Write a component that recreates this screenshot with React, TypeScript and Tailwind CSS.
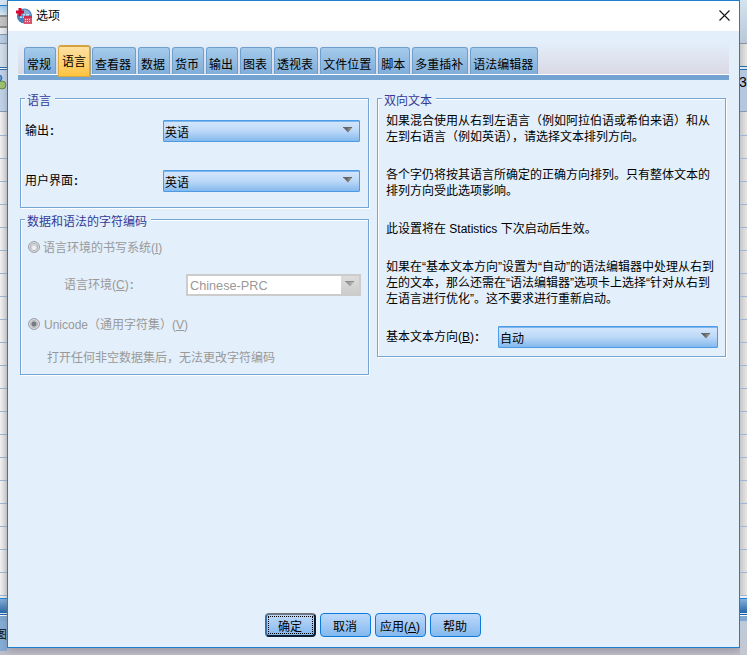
import React from "react";

const tabs = [
  "常规",
  "语言",
  "查看器",
  "数据",
  "货币",
  "输出",
  "图表",
  "透视表",
  "文件位置",
  "脚本",
  "多重插补",
  "语法编辑器",
];

const rows = Array.from({ length: 20 }, (_, i) => i);

const Arrow = ({ disabled = false }: { disabled?: boolean }) => (
  <svg width="10" height="7" viewBox="0 0 10 7" className="mb-[2px] shrink-0">
    <defs>
      <linearGradient id={disabled ? "arrow-off" : "arrow-on"}>
        <stop offset="0" stopColor={disabled ? "#858585" : "#444"} />
        <stop offset="1" stopColor={disabled ? "#c4c4c4" : "#aaa"} />
      </linearGradient>
    </defs>
    <path d="M.5 .5H9.5L5 5.5Z" fill={disabled ? "url(#arrow-off)" : "url(#arrow-on)"} />
    <path d="M0 .5H9" stroke={disabled ? "#8d8d8d" : "#666"} />
  </svg>
);

const Select = ({ value, className }: { value: string; className: string }) => (
  <div
    className={`flex h-[22px] items-center justify-between rounded-[1px] border border-[#4b9be6] bg-linear-to-b from-[#d5e6fc] via-[#bcd9f8] to-[#84b9ec] pr-[6px] pl-px shadow-[inset_0_1px_0_#7db7ef] ${className}`}
  >
    <span className="pt-[3px]">{value}</span>
    <Arrow />
  </div>
);

const Group = ({
  title,
  className,
  children,
}: {
  title: string;
  className: string;
  children: React.ReactNode;
}) => (
  <section
    className={`border border-[#74a5d5] shadow-[1px_1px_0_#fff,inset_1px_1px_0_#fff] ${className}`}
  >
    <h2 className="-mt-[7px] ml-1 h-4 w-fit bg-[#e3effb] pr-1 pl-[2px] leading-[18px] text-[#333b98]">
      {title}
    </h2>
    {children}
  </section>
);

const Colon = () => <b className="ml-px">:</b>;

const Radio = ({ checked = false }: { checked?: boolean }) => (
  <svg width="12" height="12" viewBox="0 0 12 12" className="shrink-0">
    <circle cx="6" cy="6" r="5.4" fill="#e6e8ec" stroke="#92969d" />
    <circle cx="6" cy="6" r="3.7" fill={checked ? "#f2f3f5" : "#d5d8dd"} stroke="#a6a9b0" strokeWidth=".8" />
    {checked ? (
      <circle cx="6" cy="6" r="2.7" fill="#767b84" />
    ) : (
      <circle cx="6" cy="7" r="2" fill="#eef0f3" />
    )}
  </svg>
);

const AppIcon = () => (
  <svg width="17" height="17" viewBox="0 0 17 17">
    <circle cx="8.5" cy="8" r="7.6" fill="#4580bc" />
    <path d="M6 2Q11 0 14 5L15 7H6Z" fill="#86add4" />
    <path d="M4 6H13V10H4Z" fill="#c9dced" />
    <path d="M4 8H13M6.5 6V10M9.5 6V10" stroke="#5c92c8" />
    <path d="M0 2.5H8V5.5H0ZM2.5 0H5.5V8H2.5Z" fill="#d5092f" />
    <path d="M8 8H16V16H8Z" fill="#d8556f" />
    <path d="M8 8H16V10H8Z" fill="#c9304f" />
    <path d="M9 11H10V12H9ZM11 11H12V12H11ZM13 11H14V12H13ZM9 13H10V14H9ZM11 13H12V14H11ZM13 13H14V14H13Z" fill="#f7dfe4" />
  </svg>
);

const Rows = () => (
  <>
    {rows.map((row) => (
      <div key={row} className="h-[23px] shrink-0 border-b border-[#9db7d6]" />
    ))}
    <div className="h-[2px] shrink-0 bg-[#eee]" />
    <div className="h-[15px] shrink-0 border-t border-[#1683df] bg-linear-to-b from-[#85b1da] to-[#2465a5]" />
    <div className="h-[2px] shrink-0 border-b border-[#155da6] bg-[#d6eafa]" />
    <div className="h-[6px] shrink-0 border-t border-white bg-[#7fa8d1]" />
  </>
);

const LeftStrip = () => (
  <div className="flex h-full w-[7px] shrink-0 flex-col overflow-hidden bg-linear-to-r from-[#f2f2f2] to-[#dcdcdc]">
    <div className="h-[6px] shrink-0 border-b border-[#207dc6] bg-[#d6e6f4]" />
    <div className="h-[9px] shrink-0 bg-linear-to-b from-[#9dccf0] to-[#ddecf6]" />
    <div className="h-[13px] shrink-0 border-y-2 border-[#8b8b8b] bg-[#c4c4c4]" />
    <div className="h-[6px] shrink-0 bg-[#e8edf2]" />
    <div className="h-[10px] shrink-0 border-y border-[#8196ad] bg-[#b9cfe6]" />
    <div className="h-[23px] shrink-0 bg-[#d3dfec]" />
    <div className="h-[3px] shrink-0 border-y border-[#2268a8] bg-white" />
    <div className="h-[42px] shrink-0 border-b border-[#8499b2] bg-[#c0d2e9]">
      <svg width="7" height="24" viewBox="0 0 7 24">
        <circle cx="-1" cy="8" r="3" fill="#5e94d1" stroke="#326aab" />
        <circle cx="2" cy="15" r="4" fill="#9dc36e" stroke="#638940" />
      </svg>
    </div>
    <div className="h-[24px] shrink-0 border-b border-[#9db7d6]" />
    <Rows />
    <div className="h-[30px] shrink-0 bg-[#84add7] pt-[7px] leading-[14px]">
      <span className="-ml-[5px]">图</span>
    </div>
    <div className="flex-1 bg-[#c0bfc9]" />
  </div>
);

const RightStrip = () => (
  <div className="flex h-full w-[7px] shrink-0 flex-col overflow-hidden bg-linear-to-r from-[#c7c7c7] to-[#e6e6e6]">
    <div className="h-[44px] shrink-0 border-b border-[#8d929a] bg-linear-to-b from-[#d5e2ef] to-[#b9c7d8]" />
    <div className="h-[22px] shrink-0" />
    <div className="h-[4px] shrink-0 border-y border-[#286aa6] bg-[#dce5ed]" />
    <div className="h-[42px] shrink-0 border-b border-[#8499b2] bg-[#b5c7df] pt-[4px] text-[14px] leading-4">
      <span className="-ml-px">3</span>
    </div>
    <div className="h-[24px] shrink-0 border-b border-[#9db7d6]" />
    <Rows />
    <div className="h-[34px] shrink-0 bg-linear-to-b from-[#bccbd9] to-[#c5c7d0]" />
  </div>
);

const buttonClass =
  "flex h-6 w-[51px] items-center justify-center rounded-[4px] border border-[#0d7ade] bg-linear-to-b from-[#bed9fa] to-[#83b8ee] pt-[3px] pr-px";

const App = () => {
  return (
    <div className="flex h-[655px] w-[747px] overflow-hidden bg-[#c0bfc9] font-['Liberation_Sans','Noto_Sans_CJK_SC',sans-serif] text-[12px] leading-4 whitespace-nowrap text-black">
      <LeftStrip />
      <main className="flex h-[648px] w-[733px] shrink-0 flex-col border border-[#1c7ecf] bg-[#e3effb] shadow-[0_3px_7px_#77778388]">
        <header className="flex h-[30px] shrink-0 items-center bg-white pr-[9px] pl-2">
          <AppIcon />
          <h1 className="ml-[3px] flex-1">选项</h1>
          <svg width="11" height="11" viewBox="0 0 11 11" className="mb-[2px]">
            <path d="M.5 .5L10.5 10.5M10.5 .5L.5 10.5" stroke="#111" strokeWidth="1.1" />
          </svg>
        </header>

        <nav className="mx-[10px] mt-[11px] flex h-[38px] shrink-0 items-end gap-[2px] border-b-[5px] border-[#74a3d2] bg-linear-to-b from-[#e3effb] to-[#d9d8e4] pl-[6px] shadow-[inset_0_-1px_0_#fff]">
          {tabs.map((tab) =>
            tab === "语言" ? (
              <div
                key={tab}
                className="relative top-[2px] flex h-8 shrink-0 items-center rounded-t-[3px] border border-t-2 border-[#d9a944] border-t-[#d4a340] bg-linear-to-b from-[#ffe1a1] to-[#ffc33c] px-[3px] shadow-[1px_0_0_#a9a489]"
              >
                {tab}
              </div>
            ) : (
              <div
                key={tab}
                className="mb-px flex h-[27px] shrink-0 items-center rounded-t-[3px] border border-b-0 border-[#6d9fcd] bg-linear-to-b from-[#a5cbec] to-[#80add8] pt-[7px] pr-1 pl-[2px]"
              >
                {tab}
              </div>
            )
          )}
        </nav>

        <div className="flex flex-1 items-start gap-2 px-3 pt-[18px]">
          <div className="flex w-[349px] flex-col gap-[11px]">
            <Group title="语言" className="h-[110px]">
              <div className="mt-3 flex items-center pl-1">
                <span className="w-[138px]">
                  输出
                  <Colon />
                </span>
                <Select value="英语" className="w-[197px]" />
              </div>
              <div className="mt-7 flex items-center pl-1">
                <span className="w-[138px]">
                  用户界面
                  <Colon />
                </span>
                <Select value="英语" className="w-[197px]" />
              </div>
            </Group>

            <Group title="数据和语法的字符编码" className="h-[156px] text-[#999]">
              <div className="mt-[10px] flex h-4 items-center gap-1 pl-[7px]">
                <Radio />
                <span className="-ml-px pt-[2px]">
                  语言环境的书写系统(<u>I</u>)
                </span>
              </div>
              <div className="mt-[19px] flex items-center pl-11">
                <span className="-ml-px w-[122px]">
                  语言环境(<u>C</u>)
                  <Colon />
                </span>
                <div className="flex h-[22px] w-[175px] items-stretch border-2 border-[#ccc] bg-white">
                  <span className="flex-1 pt-[2px] pl-[2px] text-[12.7px]">Chinese-PRC</span>
                  <span className="flex w-[18px] items-center justify-center bg-linear-to-b from-[#ddd] to-[#ccc]">
                    <Arrow disabled />
                  </span>
                </div>
              </div>
              <div className="mt-5 flex h-4 items-center gap-1 pl-[7px]">
                <Radio checked />
                <span className="pt-[2px]">
                  Unicode（通用字符集）(<u>V</u>)
                </span>
              </div>
              <p className="mt-[18px] pl-[26px]">打开任何非空数据集后，无法更改字符编码</p>
            </Group>
          </div>

          <Group title="双向文本" className="h-[259px] w-[349px]">
            <div className="mt-[5px] flex flex-col gap-[22px] pl-2">
              <p>
                如果混合使用从右到左语言（例如阿拉伯语或希伯来语）和从
                <br />
                左到右语言（例如英语），请选择文本排列方向。
              </p>
              <p>
                各个字仍将按其语言所确定的正确方向排列。只有整体文本的
                <br />
                排列方向受此选项影响。
              </p>
              <p>此设置将在 Statistics 下次启动后生效。</p>
              <p>
                如果在“基本文本方向”设置为“自动”的语法编辑器中处理从右到
                <br />
                左的文本，那么还需在“语法编辑器”选项卡上选择“针对从右到
                <br />
                左语言进行优化”。这不要求进行重新启动。
              </p>
            </div>
            <div className="mt-[19px] flex items-center pl-2">
              <span className="w-[112px]">
                基本文本方向(<u>B</u>)
                <Colon />
              </span>
              <Select value="自动" className="w-[220px]" />
            </div>
          </Group>
        </div>

        <footer className="mb-[10px] ml-[257px] flex gap-1">
          <button className="flex h-6 w-[51px] items-center justify-center rounded-[4px] border-2 border-[#0b1e35] border-t-[#70757d] border-l-[#386fa8] bg-linear-to-b from-[#bed9fa] to-[#83b8ee] p-px">
            <span className="flex h-full w-full items-center justify-center border border-dotted border-black pt-[3px] pr-px">
              确定
            </span>
          </button>
          <button className={buttonClass}>取消</button>
          <button className={buttonClass}>
            应用(<u>A</u>)
          </button>
          <button className={buttonClass}>帮助</button>
        </footer>
      </main>
      <RightStrip />
    </div>
  );
};

export default App;
